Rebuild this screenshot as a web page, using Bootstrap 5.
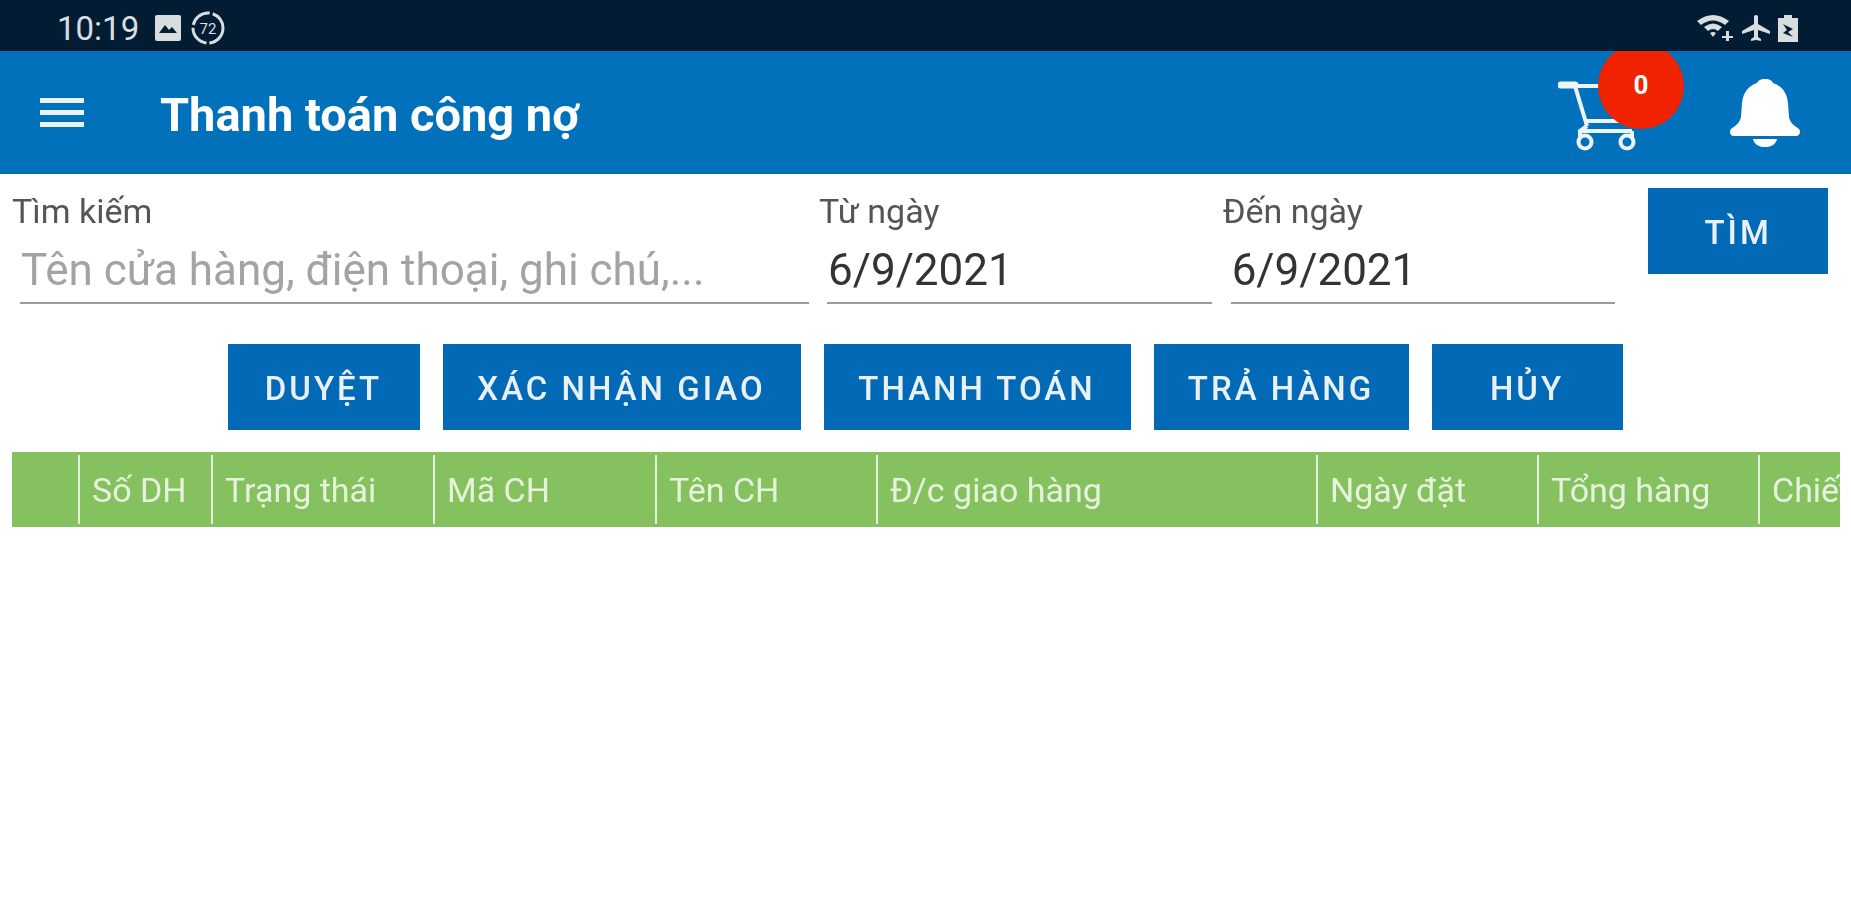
<!DOCTYPE html>
<html lang="en">

<head>
  <meta charset="UTF-8">
  <title>Thanh toán công nợ</title>
  <meta name="viewport" content="width=device-width, initial-scale=1">
  <link href="https://cdn.jsdelivr.net/npm/bootstrap@5.3.3/dist/css/bootstrap.min.css" rel="stylesheet">
  <style>
    body {
      font-family: Roboto, "Liberation Sans", sans-serif;
      background: #fff;
      overflow: hidden;
      min-height: 100vh;
      filter: blur(0.6px);
    }

    .status-bar {
      height: 51px;
      background: #021c33;
      color: #d8dde0;
      padding: 5px 53px 0 57px;
      position: relative;
      z-index: 2;
    }

    .status-time {
      font-size: 33px;
      line-height: 1;
    }

    .app-bar {
      height: 123px;
      background: #0271bc;
      color: #fff;
      padding: 0 50px 0 40px;
      position: relative;
    }

    .app-title {
      font-size: 47px;
      font-weight: 700;
      margin: 6px 0 0 76px;
    }

    .cart-wrap {
      position: relative;
      width: 78px;
      height: 72px;
      margin-right: 94px;
      margin-top: 4px;
    }

    .cart-badge {
      position: absolute;
      left: 40px;
      top: -36px;
      width: 86px;
      height: 86px;
      border-radius: 50%;
      background: #f02200;
      font-size: 26px;
      font-weight: 700;
    }

    .filter-row {
      padding: 14px 23px 0 12px;
      height: 170px;
    }

    .field-label {
      display: block;
      font-size: 34px;
      line-height: 36px;
      color: #555;
      margin: 5px 0 11px;
    }

    .field-input.form-control {
      border: 0;
      border-bottom: 2px solid #9a9a9a;
      border-radius: 0;
      background: transparent;
      box-shadow: none;
      font-size: 44px;
      line-height: 48px;
      height: 64px;
      padding: 6px 1px 8px;
      color: #333;
      margin: 0 0 0 8px;
      width: calc(100% - 8px);
    }

    .field-input::placeholder {
      color: #a3a3a3;
      opacity: 1;
    }

    .field-search { width: 798px; margin-right: 10px; }
    .field-date { width: 393px; margin-right: 11px; }

    .btn.blue-btn {
      background: #0269b6;
      border: 0;
      border-radius: 0;
      color: #e9f1f7;
      height: 86px;
      font-size: 33px;
      font-weight: 500;
      letter-spacing: 3px;
      padding: 3px 0 0;
    }

    .search-btn { width: 180px; margin-left: 22px; }

    .action-row { padding-left: 227.5px; gap: 23px; }
    .w-duyet { width: 192px; }
    .w-xacnhan { width: 358px; }
    .w-thanhtoan { width: 307px; }
    .w-trahang { width: 255px; }
    .w-huy { width: 191px; }

    .grid-wrap {
      margin: 22px 11px 0 12px;
      overflow: hidden;
      background: #86c160;
    }

    .grid-head {
      table-layout: fixed;
      width: 1968px;
      margin: 0;
      border-collapse: collapse;
    }

    .grid-head th {
      position: relative;
      height: 75px;
      padding: 2px 0 0 12px;
      font-size: 34px;
      font-weight: 400;
      color: #e6f2dc;
      background: #86c160;
      white-space: nowrap;
      overflow: hidden;
      vertical-align: middle;
    }

    .grid-head th::after {
      content: "";
      position: absolute;
      top: 3px;
      bottom: 3px;
      right: 0;
      width: 2px;
      background: #e3f0d8;
    }
  </style>
</head>

<body>
  <div class="status-bar d-flex align-items-center">
    <span class="status-time">10:19</span>
    <svg class="ms-3" width="26" height="26" viewBox="0 0 26 26">
      <rect width="26" height="26" rx="2" fill="#d8dde0"/>
      <path d="M4 18l6-8 4 5 3-3 5 6z" fill="#021c33"/>
    </svg>
    <svg class="ms-2" width="38" height="38" viewBox="0 0 38 38">
      <circle cx="19" cy="19" r="15" fill="none" stroke="#d8dde0" stroke-width="3" stroke-dasharray="22 3"/>
      <text x="19" y="25" font-size="15" font-family="Roboto" fill="#d8dde0" text-anchor="middle">72</text>
    </svg>
    <div class="ms-auto d-flex align-items-center gap-2">
      <svg width="38" height="28" viewBox="0 0 38 28">
        <path d="M1 7q16-12 32 0l-4 4q-12-9-24 0zM8 13q9-7 18 0l-4 4q-5-4-10 0z" fill="#d8dde0"/>
        <path d="M14 19q3-2 6 0l-3 4zM26 22h11v2H26zM30 17h3v10h-3z" fill="#d8dde0"/>
      </svg>
      <svg width="28" height="28" viewBox="0 0 28 28">
        <path d="M12 2q2-2 4 0v8l12 7v3l-12-4v7l3 2v2l-5-1-5 1v-2l3-2v-7L0 20v-3l12-7z" fill="#d8dde0"/>
      </svg>
      <svg width="20" height="27" viewBox="0 0 20 27">
        <path d="M6 0h8v3h6v24H0V3h6z" fill="#d8dde0"/>
        <path d="M5 9l10 5-5 3 5 5-10-4 4-3z" fill="#021c33"/>
      </svg>
    </div>
  </div>

  <header class="app-bar d-flex align-items-center">
    <svg width="44" height="29" viewBox="0 0 44 29">
      <path d="M0 0h44v5H0zM0 12h44v5H0zM0 24h44v5H0z" fill="#e9f3fa"/>
    </svg>
    <h1 class="app-title">Thanh toán công nợ</h1>
    <div class="ms-auto cart-wrap">
      <svg width="78" height="72" viewBox="0 0 78 72" fill="none" stroke="#eef5fa" stroke-width="4">
        <path d="M3 6h14" stroke-width="7" stroke-linecap="round"/>
        <path d="M17 7h40M17 7l12 40M26 42h44M24 52h50"/>
        <path d="M29 47l-7 5v8M74 52v8"/>
        <circle cx="27" cy="63" r="6.500"/>
        <circle cx="69" cy="63" r="6.500"/>
      </svg>
      <div class="cart-badge d-flex align-items-center justify-content-center">0</div>
    </div>
    <svg width="71" height="68" viewBox="0 0 71 68">
      <path d="M35 0c5 0 7 2 8 4c9 3 14 10 15 20l1 14c1 6 6 9 10 12c2 2 1 7-3 7H4c-4 0-5-5-3-7c4-3 9-6 10-12l1-14c1-10 6-17 15-20c1-2 3-4 8-4z" fill="#fff"/>
      <path d="M23 60h24c-2 11-22 11-24 0z" fill="#fff"/>
    </svg>
  </header>

  <div class="filter-row d-flex align-items-start">
    <div class="field-search">
      <label class="field-label" for="search">Tìm kiếm</label>
      <input id="search" class="form-control field-input" placeholder="Tên cửa hàng, điện thoại, ghi chú,...">
    </div>
    <div class="field-date">
      <label class="field-label" for="from">Từ ngày</label>
      <input id="from" class="form-control field-input" value="6/9/2021">
    </div>
    <div class="field-date">
      <label class="field-label" for="to">Đến ngày</label>
      <input id="to" class="form-control field-input" value="6/9/2021">
    </div>
    <button class="btn blue-btn search-btn">TÌM</button>
  </div>

  <div class="action-row d-flex">
    <button class="btn blue-btn w-duyet">DUYỆT</button>
    <button class="btn blue-btn w-xacnhan">XÁC NHẬN GIAO</button>
    <button class="btn blue-btn w-thanhtoan">THANH TOÁN</button>
    <button class="btn blue-btn w-trahang">TRẢ HÀNG</button>
    <button class="btn blue-btn w-huy">HỦY</button>
  </div>

  <div class="grid-wrap">
    <table class="grid-head">
      <thead>
        <tr id="gridRow"></tr>
      </thead>
    </table>
  </div>

  <script>
    // Header cells with their widths
    const columns = [
      ['', 68], ['Số DH', 133], ['Trạng thái', 222], ['Mã CH', 222], ['Tên CH', 221],
      ['Đ/c giao hàng', 440], ['Ngày đặt', 221], ['Tổng hàng', 221], ['Chiết khấu', 220]
    ];
    const gridRow = document.getElementById('gridRow');
    columns.forEach(([label, width]) => {
      const th = document.createElement('th');
      th.textContent = label;
      th.style.width = width + 'px';
      gridRow.appendChild(th);
    });
  </script>
  <script src="https://cdn.jsdelivr.net/npm/bootstrap@5.3.3/dist/js/bootstrap.bundle.min.js"></script>
</body>

</html>
